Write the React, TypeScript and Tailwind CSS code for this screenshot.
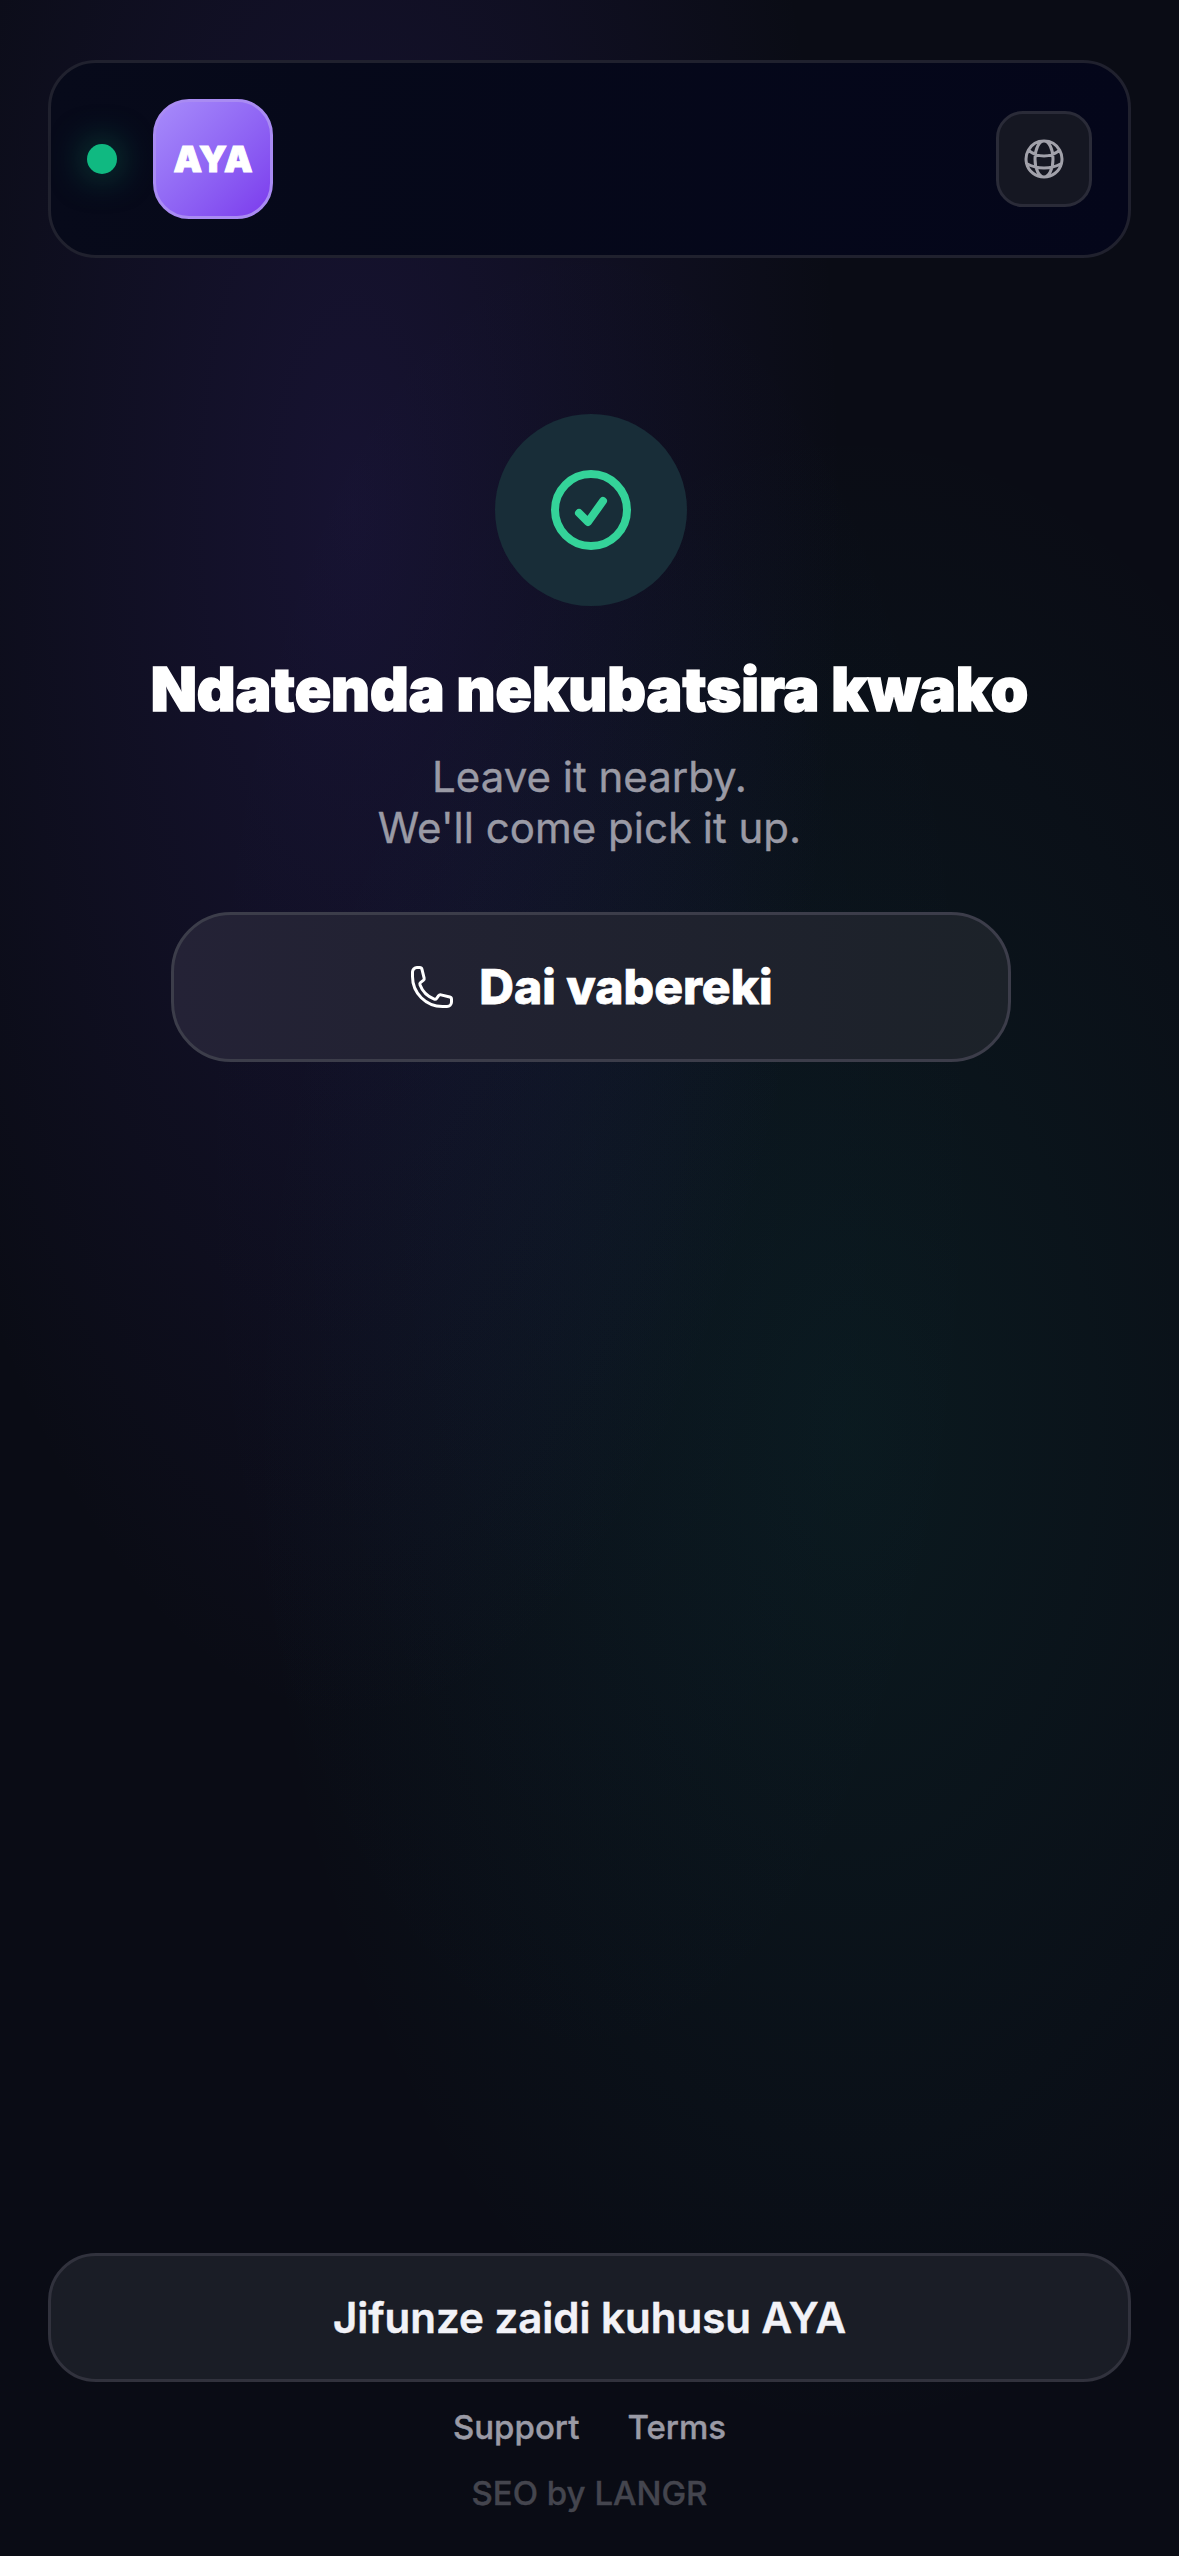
import React from 'react'

function GlobeIcon() {
  return (
    <svg viewBox="0 0 24 24" fill="none" stroke="currentColor" strokeWidth={1.5} strokeLinecap="round" strokeLinejoin="round" className="h-12 w-12">
      <path d="M12 21a9.004 9.004 0 0 0 8.716-6.747M12 21a9.004 9.004 0 0 1-8.716-6.747M12 21c2.485 0 4.5-4.03 4.5-9S14.485 3 12 3m0 18c-2.485 0-4.5-4.03-4.5-9S9.515 3 12 3m0 0a8.997 8.997 0 0 1 7.843 4.582M12 3a8.997 8.997 0 0 0-7.843 4.582m15.686 0A11.953 11.953 0 0 1 12 10.5c-2.998 0-5.74-1.1-7.843-2.918m15.686 0A8.959 8.959 0 0 1 21 12c0 .778-.099 1.533-.284 2.253m0 0A17.919 17.919 0 0 1 12 16.5c-3.162 0-6.133-.815-8.716-2.247m0 0A9.015 9.015 0 0 1 3 12c0-1.605.42-3.113 1.157-4.418" />
    </svg>
  )
}

function CheckIcon() {
  return (
    <svg viewBox="0 0 24 24" fill="none" stroke="currentColor" strokeWidth={2} strokeLinecap="round" strokeLinejoin="round" className="h-24 w-24">
      <path d="M9 12.75 11.25 15 15 9.75M21 12a9 9 0 1 1-18 0 9 9 0 0 1 18 0Z" />
    </svg>
  )
}

function PhoneIcon() {
  return (
    <svg viewBox="0 0 24 24" fill="none" stroke="currentColor" strokeWidth={1.5} strokeLinecap="round" strokeLinejoin="round" className="h-12 w-12">
      <path d="M2.25 6.75c0 8.284 6.716 15 15 15h2.25a2.25 2.25 0 0 0 2.25-2.25v-1.372c0-.516-.351-.966-.852-1.091l-4.423-1.106c-.44-.11-.902.055-1.173.417l-.97 1.293c-.282.376-.769.542-1.21.38a12.035 12.035 0 0 1-7.143-7.143c-.162-.441.004-.928.38-1.21l1.293-.97c.363-.271.527-.734.417-1.173L6.963 3.102a1.125 1.125 0 0 0-1.091-.852H4.5A2.25 2.25 0 0 0 2.25 4.5v2.25Z" />
    </svg>
  )
}

export default function App() {
  return (
    <div className="flex h-[2556px] flex-col overflow-hidden bg-[#0a0c15] bg-[radial-gradient(ellipse_at_30%_20%,rgba(90,55,200,0.16)_0%,transparent_42%),radial-gradient(ellipse_at_72%_56%,rgba(16,185,150,0.08)_0%,transparent_50%),radial-gradient(ellipse_at_50%_45%,rgba(59,130,246,0.02)_0%,transparent_50%)] px-12 font-['Inter',sans-serif]">
      <header className="mt-[60px] flex h-[198px] items-center justify-between rounded-[48px] border-[3px] border-[#20212e] bg-gradient-to-r from-[#070a1a] to-[#04061a] px-9">
        <div className="flex items-center gap-9">
          <span className="h-[30px] w-[30px] rounded-full bg-[#10b981] shadow-[0_0_36px_rgba(16,185,129,0.5)]" />
          <div className="flex h-[120px] w-[120px] items-center justify-center rounded-[36px] border-[3px] border-[#a98bf3] bg-gradient-to-br from-[#a78bfa] to-[#7c3aed] text-[36px] font-black text-white [-webkit-text-stroke:1px_white]">
            AYA
          </div>
        </div>
        <button className="flex h-24 w-24 items-center justify-center rounded-[27px] border-[3px] border-[#2a2b38] bg-[#151722] text-[#a1a1aa]">
          <GlobeIcon />
        </button>
      </header>

      <main className="mt-[156px] flex flex-col items-center">
        <div className="ml-[3px] flex h-48 w-48 items-center justify-center rounded-full bg-[#182d38] text-[#34d399]">
          <CheckIcon />
        </div>
        <h1 className="mt-[47px] text-[60px] leading-[72px] font-black text-white [-webkit-text-stroke:1.5px_white]">Ndatenda nekubatsira kwako</h1>
        <p className="mt-[26px] text-center text-[42px] leading-[51px] text-[#9a9aa5] [-webkit-text-stroke:0.4px_#9a9aa5]">
          Leave it nearby.
          <br />
          We'll come pick it up.
        </p>
        <button className="mt-[59px] ml-[2px] flex h-[150px] w-[840px] items-center justify-center gap-[23px] rounded-[60px] border-[3px] border-[#3c3d4a] bg-gradient-to-r from-[#242236] to-[#1c2229] text-[48px] font-extrabold text-white [-webkit-text-stroke:0.75px_white]">
          <PhoneIcon />
          Dai vabereki
        </button>
      </main>

      <footer className="mt-auto flex flex-col items-center pb-[41px]">
        <button className="flex h-[129px] w-full items-center justify-center rounded-[48px] border-[3px] border-[#31323d] bg-[#1a1d26] text-[42px] font-semibold text-[#f2f2f7] [-webkit-text-stroke:0.5px_#f2f2f7]">
          Jifunze zaidi kuhusu AYA
        </button>
        <div className="mt-[23px] flex items-center gap-12 text-[33px] leading-[44px] font-medium text-[#9a9aa5] [-webkit-text-stroke:0.4px_#9a9aa5]">
          <span>Support</span>
          <span>Terms</span>
        </div>
        <p className="mt-[22px] text-[33px] leading-[44px] font-medium text-[#44454e] [-webkit-text-stroke:0.4px_#44454e]">SEO by LANGR</p>
      </footer>
    </div>
  )
}
